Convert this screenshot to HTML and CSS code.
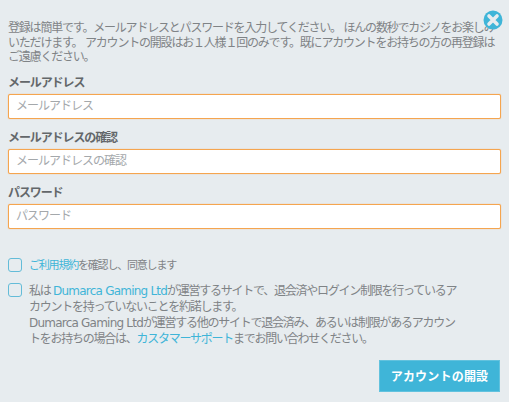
FILE: index.html
```html
<!DOCTYPE html>
<html lang="ja">
<head>
    <meta charset="UTF-8">
    <title>アカウントの開設</title>
    <link rel="stylesheet" href="styles.css">
</head>
<body>
    <div class="dialog">
        <a class="close" href="#">
            <svg width="20" height="20" viewBox="0 0 20 20">
                <circle cx="10" cy="10" r="9.5" fill="#3fb5d8"/>
                <path d="M6 6L14 14M14 6L6 14" stroke="#e7ecef" stroke-width="3.6" stroke-linecap="round"/>
            </svg>
        </a>
        <p class="intro">登録は簡単です。メールアドレスとパスワードを入力してください。 ほんの数秒でカジノをお楽しみいただけます。 アカウントの開設はお１人様１回のみです。既にアカウントをお持ちの方の再登録はご遠慮ください。</p>
        <form>
            <div class="field">
                <label>メールアドレス</label>
                <input type="text" placeholder="メールアドレス">
            </div>
            <div class="field">
                <label>メールアドレスの確認</label>
                <input type="text" placeholder="メールアドレスの確認">
            </div>
            <div class="field">
                <label>パスワード</label>
                <input type="text" placeholder="パスワード">
            </div>
            <div class="check check-first">
                <span class="box"></span>
                <p><a href="#">ご利用規約</a>を確認し、同意します</p>
            </div>
            <div class="check check-second">
                <span class="box"></span>
                <p>私は <a class="latin" href="#">Dumarca Gaming Ltd</a>が運営するサイトで、退会済やログイン制限を行っているアカウントを持っていないことを約諾します。<br><span class="latin">Dumarca Gaming Ltd</span>が運営する他のサイトで退会済み、あるいは制限があるアカウントをお持ちの場合は、<a href="#">カスタマーサポート</a>までお問い合わせください。</p>
            </div>
            <div class="actions">
                <button type="button">アカウントの開設</button>
            </div>
        </form>
    </div>
</body>
</html>
```

FILE: styles.css
```css
html, body {
    margin: 0;
    height: 100%;
}

body {
    background-color: #e7ecef;
    color: #7f8386;
    font-family: "DejaVu Sans", "Noto Sans CJK JP", sans-serif;
    font-size: 12px;
    overflow: hidden;
}

.dialog {
    position: relative;
    padding: 21px 8px 0;
}

.close {
    position: absolute;
    top: 10px;
    right: 6px;
    line-height: 0;
}

.intro {
    margin: 0 0 10px;
    line-height: 14.5px;
    letter-spacing: -1.2px;
}

.field {
    margin-bottom: 11px;
}

.field label {
    display: block;
    font-weight: bold;
    line-height: 16px;
    color: #63676a;
    letter-spacing: -1.1px;
    margin-bottom: 3px;
}

.field input {
    display: block;
    width: 493px;
    height: 25px;
    box-sizing: border-box;
    padding: 0 7px;
    border: 1px solid #f5a54f;
    border-radius: 2px;
    box-shadow: 0 0 1px #f5a54f;
    background: #fff;
    font: inherit;
    letter-spacing: -1px;
    outline: none;
}

.field input::placeholder {
    color: #a4a8ab;
}

.check {
    display: flex;
    gap: 7px;
    margin-bottom: 9px;
}

.check-first {
    margin-top: 29px;
}

.check p {
    margin: 0;
    width: 435px;
    line-height: 16px;
}

.check-first p {
    font-size: 11px;
    letter-spacing: -1.2px;
}

.check-second p {
    letter-spacing: -1.25px;
}

.check-second .latin {
    letter-spacing: -0.78px;
}

.check a {
    color: #3fb5d8;
    text-decoration: none;
}

.box {
    flex: none;
    width: 14px;
    height: 14px;
    box-sizing: border-box;
    border: 1px solid #64bcd8;
    border-radius: 3px;
}

.actions {
    display: flex;
    justify-content: flex-end;
    padding-right: 1px;
    margin-top: 13px;
}

.actions button {
    width: 121px;
    height: 32px;
    border: 1px solid #62c2de;
    background-color: #3fb5d8;
    color: #fff;
    font: inherit;
    font-weight: bold;
    letter-spacing: 0.2px;
}
```
